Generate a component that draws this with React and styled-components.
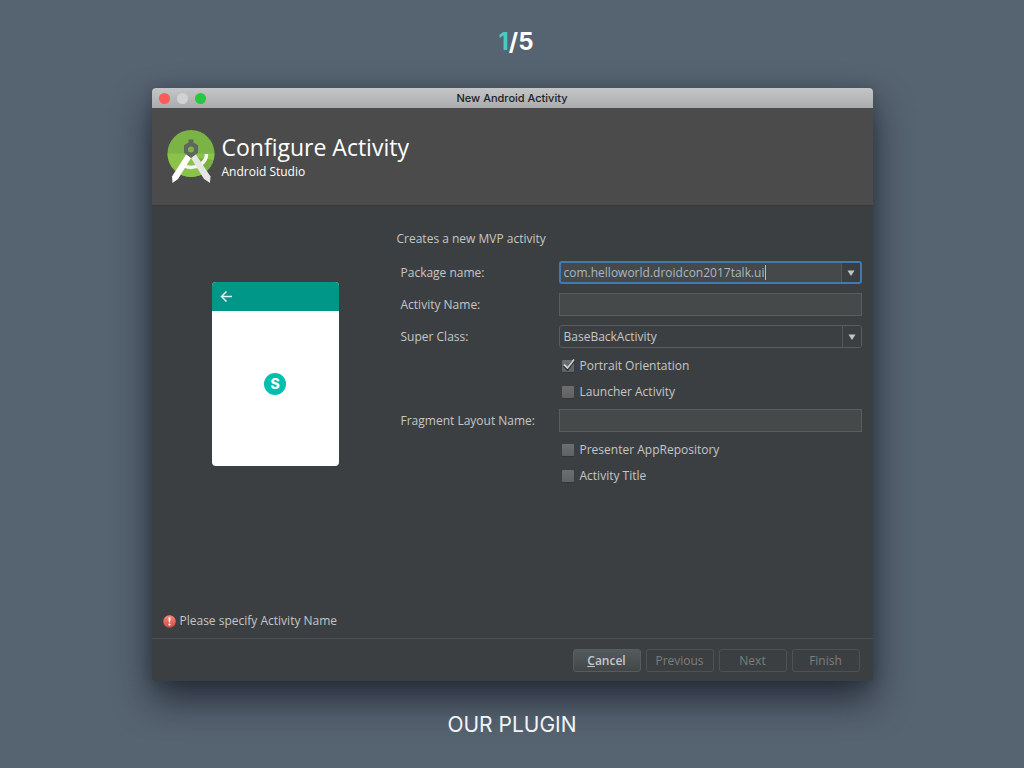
import React, { useState } from "react";
import styled, { createGlobalStyle, css } from "styled-components";

const GlobalStyle = createGlobalStyle`
  *, *::before, *::after { box-sizing: border-box; }
  body {
    margin: 0;
    background: #566370;
    color: #c4c6c8;
    font-family: "Open Sans", "Noto Sans", sans-serif;
    font-size: 12px;
    line-height: 16px;
    font-weight: 500;
  }
  input, select, button { font: inherit; color: inherit; margin: 0; }
  h1, h2, p { margin: 0; }
`;

const Slide = styled.div`
  min-height: 100vh;
  display: flex;
  flex-direction: column;
  align-items: center;
  padding: 28px 24px;
`;

const Counter = styled.p`
  font-family: Inter, sans-serif;
  font-size: 24px;
  line-height: 28px;
  font-weight: 700;
  color: #fff;
  padding-left: 8px;
`;

const Current = styled.span`
  color: #47cbc3;
`;

const Caption = styled.p`
  margin-top: 30px;
  font-family: Inter, sans-serif;
  font-size: 21px;
  line-height: 28px;
  font-weight: 400;
  color: #f2f4f6;
`;

const Window = styled.main`
  width: 100%;
  max-width: 721px;
  margin-top: 32px;
  border-radius: 4px;
  overflow: hidden;
  background: #3c3f41;
  box-shadow: 0 18px 36px rgba(10, 14, 26, 0.65), 0 0 12px rgba(10, 14, 26, 0.15);
`;

const TitleBar = styled.div`
  display: grid;
  grid-template-columns: 1fr auto 1fr;
  align-items: center;
  height: 20px;
  padding: 0 7px;
  background: linear-gradient(#c4c6c8, #a9abad);
  color: #222;
  font-family: Inter, sans-serif;
  font-size: 11px;
`;

const Lights = styled.div`
  display: flex;
  gap: 7px;
`;

const Light = styled.button`
  width: 11px;
  height: 11px;
  padding: 0;
  border: 0;
  border-radius: 50%;
  background: ${(p) => p.$color};
`;

const Header = styled.header`
  display: flex;
  align-items: flex-start;
  gap: 7px;
  padding: 21px 15px 20px;
  background: #4b4b4b;
  color: #fff;
`;

const HeaderText = styled.div`
  padding-top: 4px;
`;

const Heading = styled.h1`
  font-size: 23px;
  line-height: 28px;
  font-weight: 400;
`;

const Product = styled.p`
  padding-top: 2px;
  line-height: 18px;
`;

const Content = styled.div`
  display: grid;
  grid-template-columns: minmax(127px, 245fr) 476fr;
  min-height: 406px;
  border-top: 1px solid #37393b;
`;

const PreviewPane = styled.div`
  display: flex;
  justify-content: center;
  align-items: flex-start;
  padding: 76px 0 0 2px;
`;

const Phone = styled.div`
  width: 127px;
  border-radius: 4px;
  overflow: hidden;
  background: #fff;
`;

const PhoneBar = styled.div`
  display: flex;
  align-items: center;
  height: 29px;
  padding: 0 8px;
  background: #009688;
`;

const PhoneBody = styled.div`
  display: flex;
  justify-content: center;
  align-items: center;
  height: 155px;
  padding-bottom: 9px;
`;

const Badge = styled.span`
  width: 22px;
  height: 22px;
  border-radius: 50%;
  background: #00bfae;
  color: #fff;
  font-family: Inter, sans-serif;
  font-size: 14px;
  line-height: 22px;
  font-weight: 800;
  text-align: center;
`;

const Form = styled.form`
  padding: 25px 11px 0 0;
`;

const Fields = styled.div`
  display: grid;
  grid-template-columns: 158px 1fr;
  row-gap: 9px;
  align-items: center;
  padding: 14px 0 0 4px;
`;

const FieldLabel = styled.label`
  line-height: 16px;
`;

const frame = css`
  width: 100%;
  height: 23px;
  border: 1px solid #595d5d;
  background: #45494a;
`;

const TextField = styled.input`
  ${frame}
  padding: 0 4px;
  outline: none;
`;

const Combo = styled.div`
  ${frame}
  display: flex;
  align-items: stretch;
  border-radius: 3px;
  overflow: hidden;
  ${(p) => p.$active && css`border: 2px solid #4478b0;`}
  ${(p) => p.$plain && css`background: #3c3f41;`}
`;

const ComboInput = styled.input`
  field-sizing: content;
  min-width: 8px;
  padding: 0 1px 0 3px;
  border: 0;
  outline: none;
  background: transparent;
  color: #a9b7c6;
`;

const Caret = styled.span`
  width: 1px;
  margin: 2px 0;
  background: #bbb;
`;

const ComboSelect = styled.select`
  flex: 1;
  min-width: 0;
  padding: 0 4px;
  border: 0;
  outline: none;
  appearance: none;
  background: transparent;
`;

const Arrow = styled.button`
  display: flex;
  align-items: center;
  justify-content: center;
  width: 19px;
  margin-left: auto;
  padding: 0;
  border: 0;
  border-left: 1px solid #555858;
  background: #3c3f41;
`;

const CheckLabel = styled.label`
  grid-column: 2;
  display: flex;
  align-items: center;
  gap: 6px;
  height: 17px;
  padding-left: 3px;
`;

const CheckWrap = styled.span`
  display: grid;
  width: 12px;
  height: 12px;
  & > * { grid-area: 1 / 1; }
  svg { overflow: visible; pointer-events: none; }
`;

const CheckBox = styled.input`
  appearance: none;
  width: 12px;
  height: 12px;
  border-radius: 1px;
  background: linear-gradient(#6c6e6f, #5f6162);
  box-shadow: 0 1px 1px #333537;
`;

const Status = styled.p`
  display: flex;
  align-items: center;
  gap: 4px;
  padding: 2px 11px 9px;
`;

const Footer = styled.footer`
  display: flex;
  justify-content: flex-end;
  gap: 5px;
  padding: 10px 13px 9px;
  border-top: 1px solid #4d5051;
`;

const Button = styled.button`
  width: 68px;
  height: 23px;
  padding: 0;
  border: 1px solid ${(p) => (p.disabled ? "#4f5253" : "#585c5e")};
  border-radius: 3px;
  background: ${(p) => (p.disabled ? "transparent" : "linear-gradient(#555a5c, #414648)")};
  color: ${(p) => (p.disabled ? "#7b7d7e" : "#c6c8c9")};
  font-weight: ${(p) => (p.disabled ? 500 : 600)};
`;

function StudioLogo() {
  return (
    <svg width="48" height="56" viewBox="0 0 48 56" aria-hidden="true">
      <circle cx="24" cy="24.500" r="23.500" fill="#7cb346" />
      <path d="M.5 24.500a23.500 23.500 0 0 0 47 0z" fill="#8bc34a" />
      <path d="M29 28 46.500 31A23.500 23.500 0 0 1 35 45.300z" fill="#6fa23e" opacity=".6" />
      <path d="M15.500 36c6 3.500 13 3 18-.5 4.500-3 6-6 6-10.500" fill="none" stroke="#f7f7f7" strokeWidth="3.500" />
      <path d="M19.500 25 24 29 11 50 5.500 54 5 47.500z" fill="#fff" />
      <path d="M28.500 25 24 29 37 50 43 54 43.500 47.500z" fill="#e6e6e6" />
      <path d="M21.500 10.500h5v3l4.500 2.700v7.600l-7 5.200-7-5.200v-7.600l4.500-2.700z" fill="#5f665c" />
      <circle cx="24" cy="20.500" r="3" fill="#7cb346" />
    </svg>
  );
}

function BackArrow() {
  return (
    <svg width="13" height="13" viewBox="0 0 13 13" fill="none" stroke="#e8f7f5" strokeWidth="1.500" aria-hidden="true">
      <path d="M12 6.500H2M6.500 1.500l-5 5 5 5" />
    </svg>
  );
}

function Triangle() {
  return (
    <svg width="8" height="6" viewBox="0 0 8 6" aria-hidden="true">
      <path d="M.5.5h7L4 6z" fill="#c3c5c6" />
    </svg>
  );
}

function ErrorIcon() {
  return (
    <svg width="13" height="13" viewBox="0 0 13 13" aria-hidden="true">
      <defs>
        <linearGradient id="err" x1="0" y1="0" x2="0" y2="1">
          <stop offset="0" stopColor="#f08a7c" />
          <stop offset="1" stopColor="#d54b40" />
        </linearGradient>
      </defs>
      <circle cx="6.500" cy="6.500" r="6.200" fill="url(#err)" />
      <path d="M5.500 2.500h2l-.4 5h-1.200z" fill="#fff" />
      <circle cx="6.500" cy="9.600" r="1.100" fill="#fff" />
    </svg>
  );
}

function Check({ label, initial = false }) {
  const [on, setOn] = useState(initial);
  return (
    <CheckLabel>
      <CheckWrap>
        <CheckBox type="checkbox" checked={on} onChange={(e) => setOn(e.target.checked)} />
        {on && (
          <svg width="12" height="12" viewBox="0 0 12 12" fill="none" aria-hidden="true">
            <path d="M2 5.500 5.500 9 12 0" stroke="#2b2d2e" strokeWidth="3" />
            <path d="M2 4.500 5.500 8 12-.5" stroke="#d0d2d3" strokeWidth="1.800" />
          </svg>
        )}
      </CheckWrap>
      {label}
    </CheckLabel>
  );
}

export default function App() {
  const [pkg, setPkg] = useState("com.helloworld.droidcon2017talk.ui");
  return (
    <>
      <GlobalStyle />
      <Slide>
        <Counter><Current>1</Current>/5</Counter>
        <Window>
          <TitleBar>
            <Lights>
              <Light type="button" aria-label="Close" $color="#fc5b57" />
              <Light type="button" aria-label="Minimize" $color="#d2d2d2" />
              <Light type="button" aria-label="Zoom" $color="#27c73f" />
            </Lights>
            <span>New Android Activity</span>
          </TitleBar>
          <Header>
            <StudioLogo />
            <HeaderText>
              <Heading>Configure Activity</Heading>
              <Product>Android Studio</Product>
            </HeaderText>
          </Header>
          <Content>
            <PreviewPane>
              <Phone>
                <PhoneBar><BackArrow /></PhoneBar>
                <PhoneBody><Badge>S</Badge></PhoneBody>
              </Phone>
            </PreviewPane>
            <Form onSubmit={(e) => e.preventDefault()}>
              <p>Creates a new MVP activity</p>
              <Fields>
                <FieldLabel htmlFor="package">Package name:</FieldLabel>
                <Combo $active>
                  <ComboInput id="package" value={pkg} onChange={(e) => setPkg(e.target.value)} spellCheck={false} />
                  <Caret />
                  <Arrow type="button" aria-label="Recent packages"><Triangle /></Arrow>
                </Combo>
                <FieldLabel htmlFor="activity">Activity Name:</FieldLabel>
                <TextField id="activity" />
                <FieldLabel htmlFor="super">Super Class:</FieldLabel>
                <Combo $plain>
                  <ComboSelect id="super">
                    <option>BaseBackActivity</option>
                  </ComboSelect>
                  <Arrow as="span"><Triangle /></Arrow>
                </Combo>
                <Check label="Portrait Orientation" initial />
                <Check label="Launcher Activity" />
                <FieldLabel htmlFor="fragment">Fragment Layout Name:</FieldLabel>
                <TextField id="fragment" />
                <Check label="Presenter AppRepository" />
                <Check label="Activity Title" />
              </Fields>
            </Form>
          </Content>
          <Status role="alert"><ErrorIcon />Please specify Activity Name</Status>
          <Footer>
            <Button type="button"><u>C</u>ancel</Button>
            <Button type="button" disabled>Previous</Button>
            <Button type="button" disabled>Next</Button>
            <Button type="button" disabled>Finish</Button>
          </Footer>
        </Window>
        <Caption>OUR PLUGIN</Caption>
      </Slide>
    </>
  );
}
